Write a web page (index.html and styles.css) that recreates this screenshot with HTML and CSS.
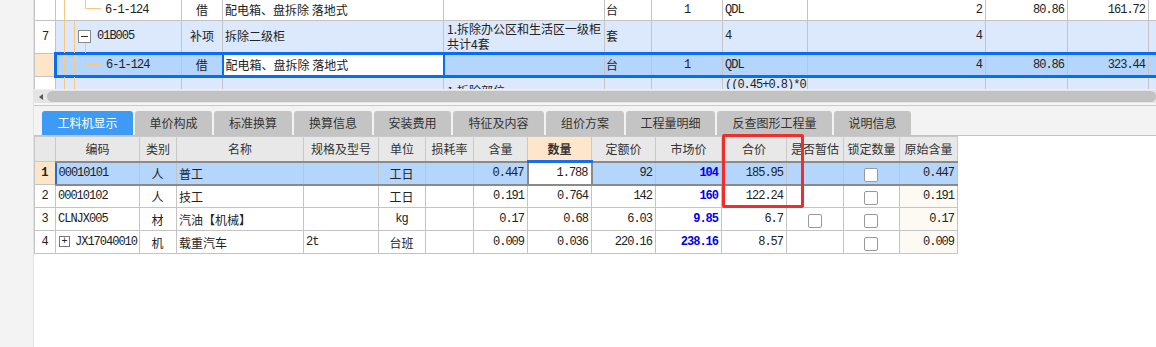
FILE: index.html
```html
<!DOCTYPE html>
<html lang="zh-CN">
  <head>
    <meta charset="UTF-8" />
    <title>工料机显示</title>
    <link rel="stylesheet" href="styles.css">
  </head>
  <body>
    <div class="app">
      <div class="side"></div>
      <div class="main">
        <!-- 清单定额列表 -->
        <div class="grid-top">
          <table class="top">
            <colgroup>
              <col style="width:21px"><col style="width:126px"><col style="width:41px"><col style="width:221px">
              <col style="width:161px"><col style="width:47px"><col style="width:71px"><col style="width:85px">
              <col style="width:178px"><col style="width:82px"><col style="width:81px"><col style="width:40px">
            </colgroup>
            <tr class="r1">
              <td class="rn"></td>
              <td class="n code2">6-1-124</td>
              <td class="c">借</td>
              <td>配电箱、盘拆除 落地式</td>
              <td></td>
              <td class="u">台</td>
              <td class="n c">1</td>
              <td class="n">QDL</td>
              <td class="n r">2</td>
              <td class="n r">80.86</td>
              <td class="n r">161.72</td>
              <td></td>
            </tr>
            <tr class="r7">
              <td class="rn n">7</td>
              <td class="n code1">01B005</td>
              <td class="c">补项</td>
              <td>拆除二级柜</td>
              <td class="feat">1.拆除办公区和生活区一级柜<br>共计4套</td>
              <td class="u">套</td>
              <td></td>
              <td class="n">4</td>
              <td class="n r">4</td>
              <td></td>
              <td></td>
              <td></td>
            </tr>
            <tr class="sel">
              <td class="rn cur"></td>
              <td class="n code2 first">6-1-124</td>
              <td class="c">借</td>
              <td class="edit">配电箱、盘拆除 落地式</td>
              <td></td>
              <td class="u">台</td>
              <td class="n c">1</td>
              <td class="n">QDL</td>
              <td class="n r">4</td>
              <td class="n r">80.86</td>
              <td class="n r">323.44</td>
              <td></td>
            </tr>
            <tr class="r9">
              <td class="rn"></td>
              <td></td>
              <td></td>
              <td></td>
              <td class="feat low">1.拆除部位:</td>
              <td></td>
              <td></td>
              <td class="n expr">((0.45+0.8)*0</td>
              <td></td>
              <td></td>
              <td></td>
              <td></td>
            </tr>
          </table>
          <svg class="tree" width="126" height="89" viewBox="0 0 126 89">
            <g stroke="#f9c77e" stroke-width="1" fill="none">
              <path d="M9.5 0V53M9.5 56V74M9.5 77V89" />
              <path d="M19.5 21V53M19.5 56V74M19.5 77V89" />
              <path d="M30.5 0V8.5H46" />
              <path d="M30.5 42V53M30.5 56V64.5H46" />
            </g>
            <rect x="23.5" y="30.5" width="12" height="12" fill="#fff" stroke="#8a8a8a" />
            <path d="M26 36.5H33" stroke="#333" stroke-width="1" />
          </svg>
        </div>

        <div class="hscroll">
          <span class="arrow"></span>
          <div class="thumb"></div>
        </div>
        <div class="split"></div>

        <div class="tabs">
          <div class="tab active" style="width:91px">工料机显示</div>
          <div class="tab" style="width:77px">单价构成</div>
          <div class="tab" style="width:78px">标准换算</div>
          <div class="tab" style="width:78px">换算信息</div>
          <div class="tab" style="width:77px">安装费用</div>
          <div class="tab" style="width:91px">特征及内容</div>
          <div class="tab" style="width:78px">组价方案</div>
          <div class="tab" style="width:89px">工程量明细</div>
          <div class="tab" style="width:115px">反查图形工程量</div>
          <div class="tab" style="width:77px">说明信息</div>
        </div>

        <!-- 工料机明细 -->
        <div class="detail">
          <table class="grid">
            <colgroup>
              <col style="width:21px"><col style="width:84px"><col style="width:37px"><col style="width:127px">
              <col style="width:75px"><col style="width:47px"><col style="width:48px"><col style="width:54px">
              <col style="width:64px"><col style="width:64px"><col style="width:66px"><col style="width:65px">
              <col style="width:57px"><col style="width:56px"><col style="width:58px">
            </colgroup>
            <tr>
              <th></th>
              <th>编码</th>
              <th>类别</th>
              <th>名称</th>
              <th>规格及型号</th>
              <th>单位</th>
              <th>损耗率</th>
              <th>含量</th>
              <th class="sort">数量</th>
              <th>定额价</th>
              <th>市场价</th>
              <th>合价</th>
              <th>是否暂估</th>
              <th>锁定数量</th>
              <th>原始含量</th>
            </tr>
            <tr class="on">
              <td class="rn">1</td>
              <td class="n first">00010101</td>
              <td class="c">人</td>
              <td>普工</td>
              <td></td>
              <td class="c">工日</td>
              <td></td>
              <td class="n r">0.447</td>
              <td class="n r edit">1.788</td>
              <td class="n r">92</td>
              <td class="n r mk">104</td>
              <td class="n r">185.95</td>
              <td></td>
              <td class="c"><span class="cb"></span></td>
              <td class="n r orig">0.447</td>
            </tr>
            <tr>
              <td class="rn">2</td>
              <td class="n">00010102</td>
              <td class="c">人</td>
              <td>技工</td>
              <td></td>
              <td class="c">工日</td>
              <td></td>
              <td class="n r">0.191</td>
              <td class="n r">0.764</td>
              <td class="n r">142</td>
              <td class="n r mk">160</td>
              <td class="n r">122.24</td>
              <td></td>
              <td class="c"><span class="cb"></span></td>
              <td class="n r orig">0.191</td>
            </tr>
            <tr>
              <td class="rn">3</td>
              <td class="n">CLNJX005</td>
              <td class="c">材</td>
              <td>汽油【机械】</td>
              <td></td>
              <td class="n c">kg</td>
              <td></td>
              <td class="n r">0.17</td>
              <td class="n r">0.68</td>
              <td class="n r">6.03</td>
              <td class="n r mk">9.85</td>
              <td class="n r">6.7</td>
              <td class="c"><span class="cb"></span></td>
              <td class="c"><span class="cb"></span></td>
              <td class="n r orig">0.17</td>
            </tr>
            <tr>
              <td class="rn">4</td>
              <td class="n"><span class="plus">+</span>JX17040010</td>
              <td class="c">机</td>
              <td>载重汽车</td>
              <td class="n">2t</td>
              <td class="c">台班</td>
              <td></td>
              <td class="n r">0.009</td>
              <td class="n r">0.036</td>
              <td class="n r">220.16</td>
              <td class="n r mk">238.16</td>
              <td class="n r">8.57</td>
              <td></td>
              <td class="c"><span class="cb"></span></td>
              <td class="n r orig">0.009</td>
            </tr>
          </table>
          <div class="mark"></div>
        </div>
      </div>
    </div>
  </body>
</html>
```

FILE: styles.css
```css
body {
  margin: 0;
  padding: 0;
  background-color: #fff;
  font: 12px "Noto Sans CJK SC", sans-serif;
  color: #222;
}

.app {
  display: flex;
  height: 347px;
}

.side {
  width: 33px;
  background-color: #f3f3f3;
  border-right: 1px solid #e2e2e2;
}

.main {
  flex: 1;
  min-width: 0;
  overflow: hidden;
}

table {
  border-collapse: collapse;
  table-layout: fixed;
}

td {
  white-space: nowrap;
  overflow: hidden;
}

.n {
  font-family: "Liberation Mono", "Noto Sans CJK SC", monospace;
  letter-spacing: -1px;
}

.c {
  text-align: center;
}

.r {
  text-align: right;
}

/* 上方列表 */
.grid-top {
  position: relative;
  height: 89px;
  overflow: hidden;
}

.top {
  width: 1154px;
}

.top td {
  border: 1px solid #c4c4c4;
  padding: 0 2px;
  line-height: 14px;
  background-color: #fff;
}

.top .r {
  padding-right: 3px;
}

.top .u {
  padding-left: 1px;
}

.top .r1 {
  height: 20px;
}

.top .r1 td {
  border-top: 0;
}

.top .r7 {
  height: 33px;
}

.top .r7 td,
.top .r9 td {
  background-color: #dce9fc;
}

.top .rn,
.top .r7 .rn,
.top .r9 .rn {
  background-color: #fff;
  text-align: center;
}

.top .sel {
  height: 23px;
}

.top .sel td {
  background-color: #b4d5fc;
  border-top: 3px solid #0a6cf2;
  border-bottom: 3px solid #0a6cf2;
}

.top .sel .rn {
  background-color: #fde6c8;
  border-top: 1px solid #c4c4c4;
  border-bottom: 1px solid #c4c4c4;
}

.top .sel .first {
  border-left: 3px solid #0a6cf2;
}

.top .sel .edit {
  background-color: #fff;
  border-left: 2px solid #0a6cf2;
  border-right: 2px solid #0a6cf2;
}

.top .r9 {
  height: 14px;
}

.top .r9 td {
  vertical-align: top;
  border-bottom: 0;
}

.code1 {
  padding-left: 41px !important;
}

.code2 {
  padding-left: 49px !important;
}

.top .feat {
  white-space: normal;
  padding-left: 3px;
  line-height: 15px;
}

.top .feat.low {
  padding-top: 5px;
}

.tree {
  position: absolute;
  left: 21px;
  top: 0;
}

/* 横向滚动条 */
.hscroll {
  display: flex;
  align-items: center;
  height: 13px;
  border-top: 1px solid #efefef;
  background-color: #e4e4e4;
}

.arrow {
  width: 0;
  height: 0;
  margin: 0 4px 0 5px;
  border-top: 3px solid transparent;
  border-bottom: 3px solid transparent;
  border-right: 4px solid #555;
}

.thumb {
  flex: 1;
  height: 11px;
  background-color: #c2c2c2;
  border-radius: 6px;
}

.split {
  height: 2px;
  background-color: #f6f6f6;
  border-bottom: 1px solid #c9c9c9;
}

/* 页签 */
.tabs {
  display: flex;
  align-items: flex-end;
  gap: 2px;
  height: 29px;
  padding-left: 8px;
  background-color: #f3f3f3;
  border-bottom: 1px solid #c4c4c4;
}

.tab {
  height: 24px;
  line-height: 24px;
  text-align: center;
  background-color: #c4c4c4;
  color: #333;
  border-radius: 3px 3px 0 0;
  flex-shrink: 0;
}

.tab.active {
  background-color: #3d9bf5;
  color: #fff;
}

/* 工料机表格 */
.detail {
  position: relative;
}

.grid {
  width: 923px;
}

.grid th {
  height: 23px;
  padding: 0;
  font-weight: normal;
  color: #333;
  background-color: #e8e8e8;
  border: 1px solid #c9c9c9;
}

.grid th.sort {
  background-color: #fde6cc;
  font-weight: bold;
  border-bottom: 3px solid #1a6fe8;
}

.grid tr {
  height: 23px;
}

.grid td {
  padding: 0 3px 0 2px;
  border: 1px solid #c4c4c4;
}

.grid .rn {
  text-align: center;
  padding: 0;
  font-family: "Liberation Mono", monospace;
}

.grid .mk {
  color: #0000ee;
  font-weight: bold;
}

.grid .orig {
  background-color: #fdfaf4;
}

.grid .on td {
  background-color: #b4d5fc;
  border-top: 2px solid #8a8a8a;
  border-bottom: 2px solid #8a8a8a;
}

.grid .on .rn {
  background-color: #fde6c8;
  font-weight: bold;
  border-top: 1px solid #c4c4c4;
  border-bottom: 1px solid #c4c4c4;
}

.grid .on .first {
  border-left: 2px solid #1a6fe8;
}

.grid .on .edit {
  background-color: #fff;
  border: 2px solid #8a8a8a;
}

.cb {
  display: inline-block;
  width: 12px;
  height: 12px;
  border: 1px solid #999;
  border-radius: 2px;
  background-color: #fff;
  vertical-align: middle;
}

.plus {
  display: inline-block;
  width: 9px;
  height: 9px;
  margin: 0 5px 0 1px;
  border: 1px solid #777;
  line-height: 9px;
  text-align: center;
  font-size: 10px;
  letter-spacing: 0;
  vertical-align: middle;
}

.mark {
  position: absolute;
  left: 688px;
  top: -2px;
  width: 76px;
  height: 68px;
  border: 3px solid #f22b2b;
  border-radius: 2px;
}
```
